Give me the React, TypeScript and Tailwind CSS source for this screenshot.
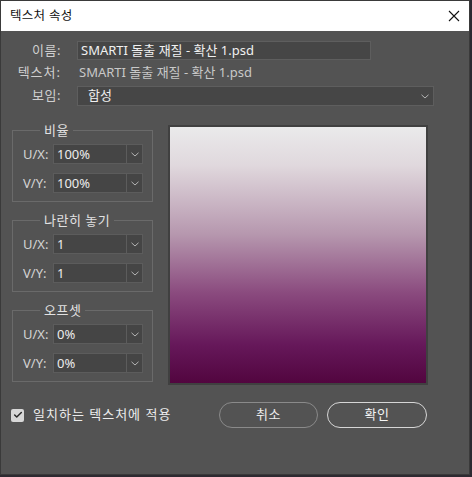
import { Check } from "lucide-react";

const font = { fontFamily: '"Noto Sans", "Noto Sans CJK KR", sans-serif' };

function Chevron() {
  return (
    <svg width="8" height="5" viewBox="0 0 8 5" aria-hidden="true">
      <path d="M0.5 0.8 L4 4 L7.5 0.8" fill="none" stroke="#b4b4b4" strokeWidth="1" />
    </svg>
  );
}

function Combo({ label, value }: { label: string; value: string }) {
  return (
    <div className="flex items-center">
      <span className="w-[30px] text-[13px] leading-none text-[#d4d4d4]">{label}</span>
      <div className="flex h-[20px] w-[90px] border border-[#5c5c5c] bg-[#454545]">
        <span className="flex-1 pl-[3px] text-[13px] leading-[18px] text-[#ececec]">{value}</span>
        <span className="flex w-[16px] items-center justify-center border-l border-[#5c5c5c]">
          <Chevron />
        </span>
      </div>
    </div>
  );
}

function Group({ title, u, v }: { title: string; u: string; v: string }) {
  return (
    <fieldset className="h-[81px] w-[141px] border border-[#6a6a6a] pl-[10px] pb-[8px]">
      <legend className="ml-[17px] px-[4px] text-[13px] leading-[18px] tracking-[0.5px] text-[#e2e2e2]">
        {title}
      </legend>
      <div className="mt-[5px] flex flex-col gap-[9px]">
        <Combo label="U/X:" value={u} />
        <Combo label="V/Y:" value={v} />
      </div>
    </fieldset>
  );
}

export default function App() {
  return (
    <div className="h-[477px] w-[472px] bg-[#2d2a31]" style={font}>
      <div className="flex h-[475px] w-[470px] flex-col border border-[#3a3a3a] bg-[#535353]">
        <div className="flex h-[30px] items-center justify-between bg-white pl-[9px] pr-[9px]">
          <span className="text-[12.5px] tracking-[0.3px] text-[#111]">텍스처 속성</span>
          <svg width="12" height="12" viewBox="0 0 12 12" aria-hidden="true">
            <path d="M1 1 L11 11 M11 1 L1 11" stroke="#111" strokeWidth="1.1" />
          </svg>
        </div>

        <div className="flex flex-col gap-[3px] pt-[10px] text-[13px]">
          <div className="flex h-[19px] items-center">
            <span className="w-[60px] text-right tracking-[0.5px] text-[#cfcfcf]">이름:</span>
            <div className="ml-[16px] flex h-[19px] w-[294px] items-center border border-[#5e5e5e] bg-[#464646] pl-[3px] text-[#f0f0f0]">
              SMARTI 돌출 재질 - 확산 1.psd
            </div>
          </div>
          <div className="flex h-[19px] items-center">
            <span className="w-[60px] text-right tracking-[1px] text-[#cfcfcf]">텍스처:</span>
            <span className="ml-[18px] text-[#c8c8c8]">SMARTI 돌출 재질 - 확산 1.psd</span>
          </div>
          <div className="mt-[1px] flex h-[20px] items-center">
            <span className="w-[60px] text-right tracking-[0.5px] text-[#cfcfcf]">보임:</span>
            <div className="ml-[16px] flex h-[20px] w-[357px] items-center justify-between border border-[#5e5e5e] bg-[#464646] pl-[10px] pr-[4px] text-[#f0f0f0]">
              <span>합성</span>
              <Chevron />
            </div>
          </div>
        </div>

        <div className="mt-[14px] flex pl-[11px]">
          <div className="flex flex-col gap-[9px] pt-[1px]">
            <Group title="비율" u="100%" v="100%" />
            <Group title="나란히 놓기" u="1" v="1" />
            <Group title="오프셋" u="0%" v="0%" />
          </div>
          <div className="ml-[15px] mt-[5px] h-[260px] w-[260px] border-2 border-[#404040]">
            <div className="h-full w-full bg-[linear-gradient(to_bottom,#eaeaeb_0%,#e0d8dd_15%,#b697ae_42%,#8a4a7e_65%,#66185a_85%,#52053f_100%)]" />
          </div>
        </div>

        <div className="mt-[17px] flex items-center pl-[10px] pr-[42px]">
          <span className="flex h-[13px] w-[13px] items-center justify-center rounded-[2px] bg-[#d8d8d8]">
            <Check size={10} strokeWidth={3.5} color="#2a2a2a" />
          </span>
          <span className="ml-[9px] text-[13px] tracking-[1px] text-[#ececec]">일치하는 텍스처에 적용</span>
          <button className="ml-auto h-[26px] w-[99px] rounded-full border border-[#8a8a8a] text-[13px] tracking-[0.5px] text-[#ececec]">
            취소
          </button>
          <button className="ml-[9px] h-[26px] w-[100px] rounded-full border-[1.5px] border-[#d6d6d6] text-[13px] tracking-[0.5px] text-[#f4f4f4]">
            확인
          </button>
        </div>
      </div>
    </div>
  );
}
